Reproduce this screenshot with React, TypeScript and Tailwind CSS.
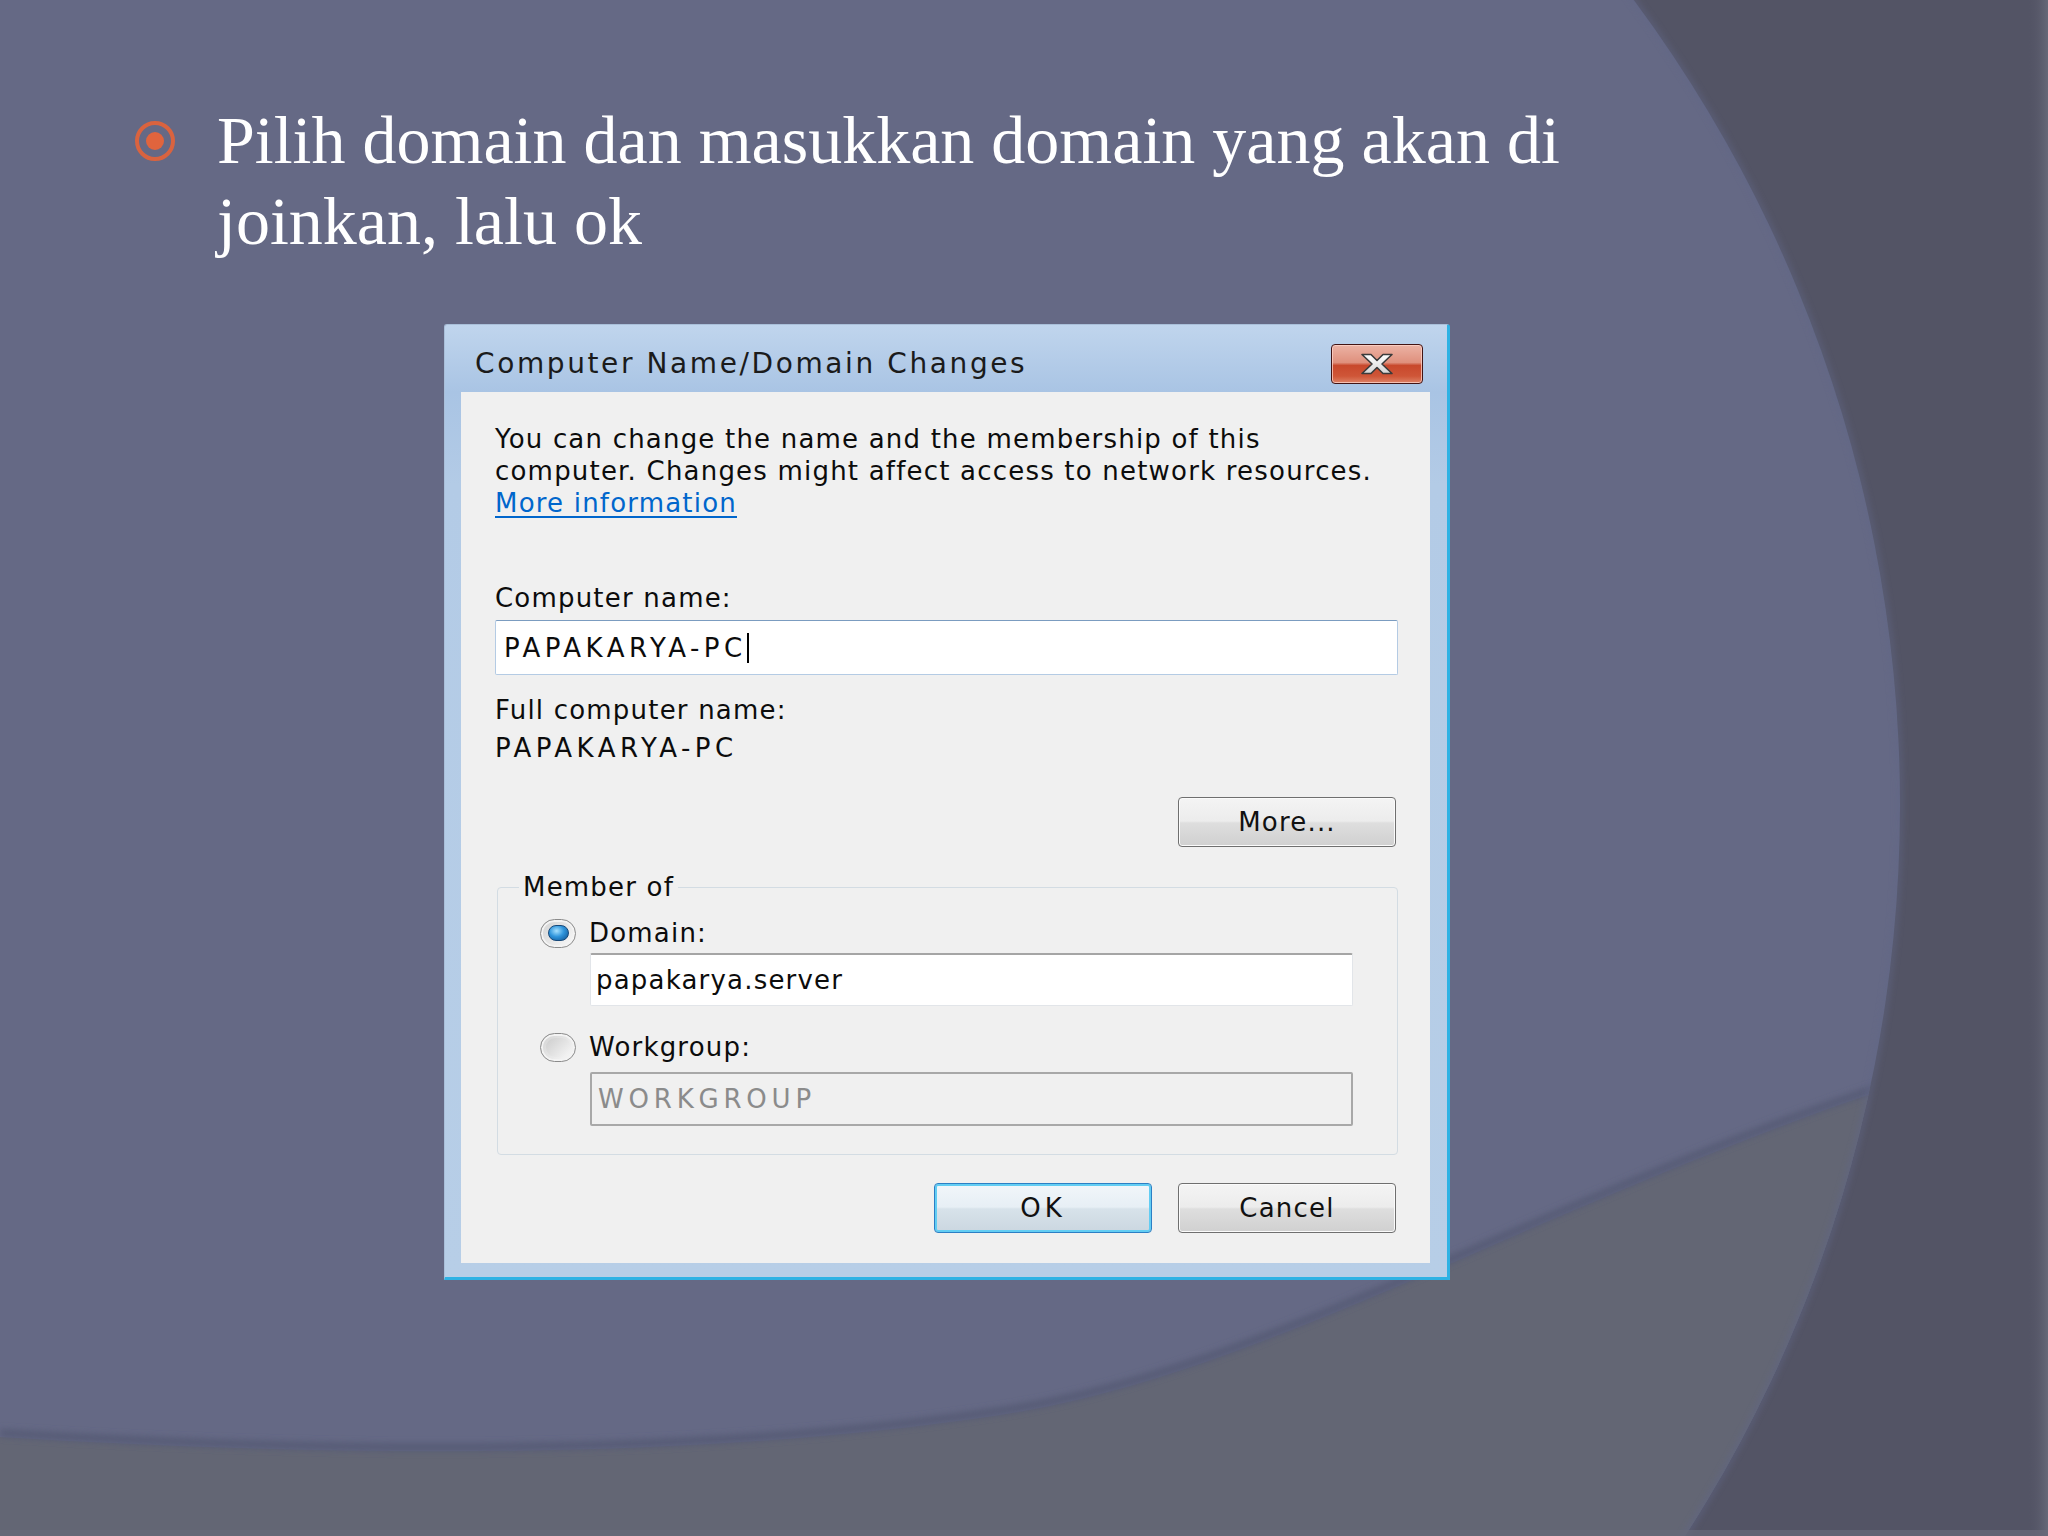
import React from "react";
import clsx from "clsx";

const ui = "font-['DejaVu_Sans',sans-serif]";

// Slide backdrop: a big blue disc, dark margin on the right, grey band along the bottom
function Backdrop() {
  const band = "M0 1437 C350 1458 700 1460 1000 1415 S1600 1160 2048 1040";
  return (
    <svg className="absolute inset-0" width="2048" height="1536" viewBox="0 0 2048 1536">
      <defs>
        <clipPath id="disc">
          <circle cx="550" cy="805" r="1350" />
        </clipPath>
        <filter id="soft" x="-5%" y="-20%" width="110%" height="140%">
          <feGaussianBlur stdDeviation="3" />
        </filter>
        <linearGradient id="edge" x1="0" x2="1" y1="0" y2="0">
          <stop offset="0" stopColor="#535465" stopOpacity="0" />
          <stop offset="1" stopColor="#666878" />
        </linearGradient>
      </defs>
      <rect width="2048" height="1536" fill="#535465" />
      <g clipPath="url(#disc)">
        <rect width="2048" height="1536" fill="#656985" />
        <path d={`${band} L2048 1536 L0 1536 Z`} fill="#636674" />
        <path d={band} transform="translate(0 -4)" fill="none" stroke="#575b76" strokeWidth="8" filter="url(#soft)" />
      </g>
      <circle cx="550" cy="805" r="1350" fill="none" stroke="#606687" strokeWidth="5" opacity="0.6" filter="url(#soft)" />
      <rect x="2028" width="20" height="1536" fill="url(#edge)" />
      <rect y="1530" width="2048" height="6" fill="#6a6b7a" opacity="0.7" />
    </svg>
  );
}

function CloseButton() {
  return (
    <div className="flex h-[40px] w-[92px] items-center justify-center rounded-[4px] border border-[#421414] bg-[linear-gradient(180deg,#ecb3a5_0%,#df907d_46%,#c8482c_54%,#cf5638_82%,#dd8266_100%)] shadow-[inset_0_0_0_1px_rgba(255,214,204,0.75)]">
      <svg width="34" height="22" viewBox="0 0 34 22">
        <defs>
          <linearGradient id="xfill" x1="0" y1="0" x2="0" y2="1">
            <stop offset="0" stopColor="#ffffff" />
            <stop offset="1" stopColor="#d6d6d6" />
          </linearGradient>
        </defs>
        <path
          d="M2 1.5H11L17 7.5L23 1.5H32L22 11L32 20.5H23L17 14.5L11 20.5H2L12 11Z"
          fill="url(#xfill)"
          stroke="#3b3b3b"
          strokeWidth="1.6"
          strokeLinejoin="round"
        />
      </svg>
    </div>
  );
}

function Radio({ checked = false }: { checked?: boolean }) {
  return (
    <span className="flex h-[29px] w-[36px] shrink-0 items-center justify-center rounded-full border border-[#8b8b8b] bg-[linear-gradient(135deg,#d2d2d2,#fafafa)] shadow-[inset_0_0_0_2px_#f3f3f3]">
      {checked ? (
        <span className="h-[16px] w-[21px] rounded-full border border-[#17497a] bg-[radial-gradient(ellipse_at_40%_35%,#a6e1ff_0%,#2f95dc_45%,#0c4f8e_100%)]" />
      ) : (
        <span className="h-[19px] w-[25px] rounded-full bg-[linear-gradient(135deg,#cdcdcd,#f7f7f7)]" />
      )}
    </span>
  );
}

function PushButton({
  children,
  primary = false,
  className,
}: {
  children: React.ReactNode;
  primary?: boolean;
  className?: string;
}) {
  return (
    <button
      type="button"
      className={clsx(
        "flex h-[50px] w-[218px] items-center justify-center rounded-[4px] border leading-none text-[#111]",
        primary
          ? "border-[#2c7fc4] bg-[linear-gradient(180deg,#f1f6fa_0%,#e7eff5_48%,#d7e2ea_52%,#cbd7e0_100%)] shadow-[inset_0_0_0_2px_#62cdf3]"
          : "border-[#6f6f6f] bg-[linear-gradient(180deg,#f4f4f4_0%,#ececec_48%,#dedede_52%,#d0d0d0_100%)] shadow-[inset_0_0_0_1px_#fbfbfb]",
        className
      )}
    >
      {children}
    </button>
  );
}

function Dialog() {
  return (
    <div
      className={clsx(
        "ml-[444px] mt-[62px] flex h-[956px] w-[1006px] flex-col rounded-t-[3px] border-b-[3px] border-l border-r-[3px] border-t border-b-[#2eb2e4] border-l-[#a9bfd9] border-r-[#2eb2e4] border-t-[#a9bfd9] bg-[linear-gradient(180deg,#c0d5ed_0px,#a9c4e4_67px,#b3cbe6_160px,#b7cee7_100%)] pb-[14px] pl-[16px] pr-[17px]",
        ui
      )}
    >
      {/* title bar */}
      <div className="flex h-[67px] shrink-0 items-center pl-[14px] pr-[7px] pt-[11px]">
        <span className="flex-1 text-[28px] tracking-[2.6px] text-[#1b1b1b]">Computer Name/Domain Changes</span>
        <CloseButton />
      </div>

      {/* client area */}
      <div className="flex flex-1 flex-col bg-[#f0f0f0] pl-[34px] pr-[32px] pt-[31px] text-[26px] leading-[32px] tracking-[1.2px] text-[#0c0c0c]">
        <p>
          You can change the name and the membership of this
          <br />
          computer. Changes might affect access to network resources.
          <br />
          <a className="text-[#0066cc] underline underline-offset-[4px]">More information</a>
        </p>

        <div className="mt-[63px]">Computer name:</div>
        <div className="mt-[6px] flex h-[55px] items-center rounded-[2px] border border-[#b4cbe4] border-t-[#7b9cc0] bg-white pl-[8px] tracking-[4.5px]">
          <span>PAPAKARYA-PC</span>
          <span className="h-[30px] w-[2px] bg-black" />
        </div>

        <div className="mt-[19px]">Full computer name:</div>
        <div className="mt-[6px] tracking-[4.5px]">PAPAKARYA-PC</div>

        <PushButton className="mr-[2px] mt-[33px] self-end">More...</PushButton>

        <fieldset className="ml-[2px] mt-[24px] rounded-[4px] border border-[#d3dce3] pb-[28px] pl-[21px] pr-[44px] pt-[14px]">
          <legend className="px-[4px]">Member of</legend>
          <div className="flex h-[32px] items-center pl-[21px]">
            <Radio checked />
            <span className="ml-[13px]">Domain:</span>
          </div>
          <div className="ml-[71px] mt-[4px] flex h-[53px] items-center rounded-[2px] border border-[#e2e5e9] border-t-2 border-t-[#a5a5a5] bg-white pl-[5px]">
            papakarya.server
          </div>
          <div className="mt-[25px] flex h-[32px] items-center pl-[21px]">
            <Radio />
            <span className="ml-[13px]">Workgroup:</span>
          </div>
          <div className="ml-[71px] mt-[9px] flex h-[54px] items-center rounded-[2px] border-2 border-[#a8a8a8] bg-[#f0f0f0] pl-[6px] tracking-[4.8px] text-[#8b8b8b]">
            WORKGROUP
          </div>
        </fieldset>

        <div className="mr-[2px] mt-[28px] flex justify-end gap-[26px]">
          <PushButton primary className="tracking-[4px]">
            OK
          </PushButton>
          <PushButton>Cancel</PushButton>
        </div>
      </div>
    </div>
  );
}

export default function App() {
  return (
    <div className="relative h-[1536px] w-[2048px] overflow-hidden bg-[#535465]">
      <Backdrop />
      <div className="relative flex flex-col pt-[100px]">
        <div className="flex pl-[135px]">
          <span className="mt-[21px] flex h-[40px] w-[40px] shrink-0 items-center justify-center rounded-full border-[4px] border-[#d9633f]">
            <span className="h-[18px] w-[18px] rounded-full bg-[#e0643d]" />
          </span>
          <p className="ml-[42px] w-[1440px] font-['Liberation_Serif',serif] text-[68px] leading-[81px] text-white">
            Pilih domain dan masukkan domain yang akan di joinkan, lalu ok
          </p>
        </div>
        <Dialog />
      </div>
    </div>
  );
}
